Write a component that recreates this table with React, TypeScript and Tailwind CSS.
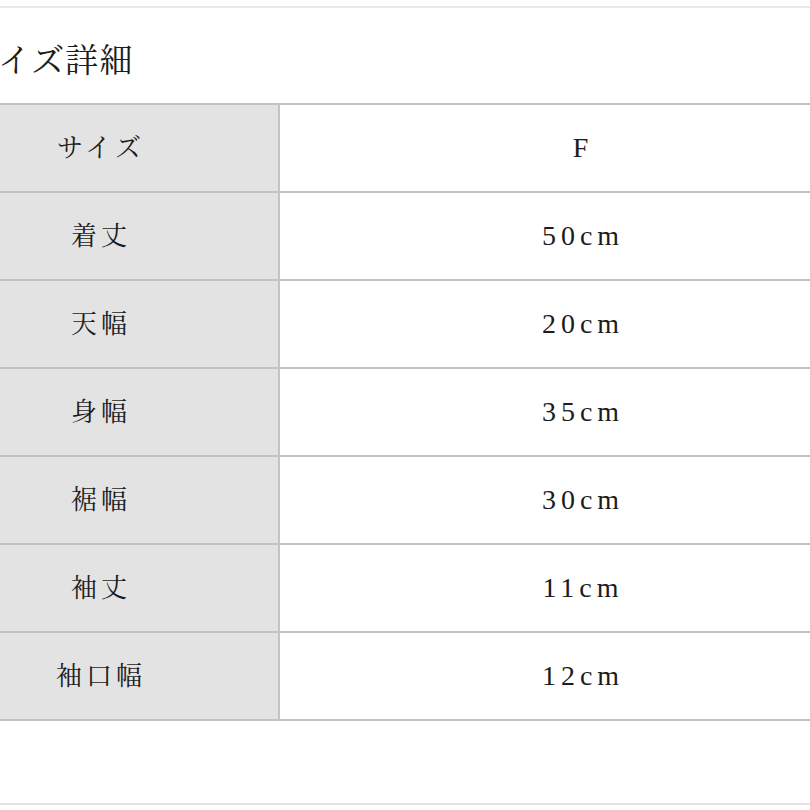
const rows = [
  { label: 'サイズ', value: 'F' },
  { label: '着丈', value: '50cm' },
  { label: '天幅', value: '20cm' },
  { label: '身幅', value: '35cm' },
  { label: '裾幅', value: '30cm' },
  { label: '袖丈', value: '11cm' },
  { label: '袖口幅', value: '12cm' },
];

const serif = "font-['Liberation_Serif','Noto_Serif_CJK_JP','Noto_Sans_CJK_JP',serif]";

export default function App() {
  return (
    <div className={`w-[810px] h-[810px] overflow-hidden bg-white text-[#1c1c1c] ${serif}`}>
      <div className="mt-[6px] border-t-2 border-[#e8e8e8]" />

      {/* Heading, cut off at the left edge */}
      <div className="h-[95px] pt-[37px]">
        <h2 className="-ml-[34px] text-[33px] leading-none tracking-[1px] whitespace-nowrap">
          サイズ詳細
        </h2>
      </div>

      {/* Size table */}
      <div className="-ml-[78px] w-[966px] border-t-2 border-[#c2c2c2]">
        {rows.map((row) => (
          <div key={row.label} className="flex h-[88px] border-b-2 border-[#c2c2c2]">
            <div className="w-[358px] shrink-0 flex items-center justify-center bg-[#e3e3e3] border-r-2 border-[#c4c4c4] text-[26px] tracking-[4px] pl-[2px]">
              {row.label}
            </div>
            <div className="w-[606px] shrink-0 flex items-center justify-center text-[28px] tracking-[5px]">
              {row.value}
            </div>
          </div>
        ))}
      </div>

      <div className="mt-[82px] border-t-2 border-[#e4e4e4]" />
    </div>
  );
}
